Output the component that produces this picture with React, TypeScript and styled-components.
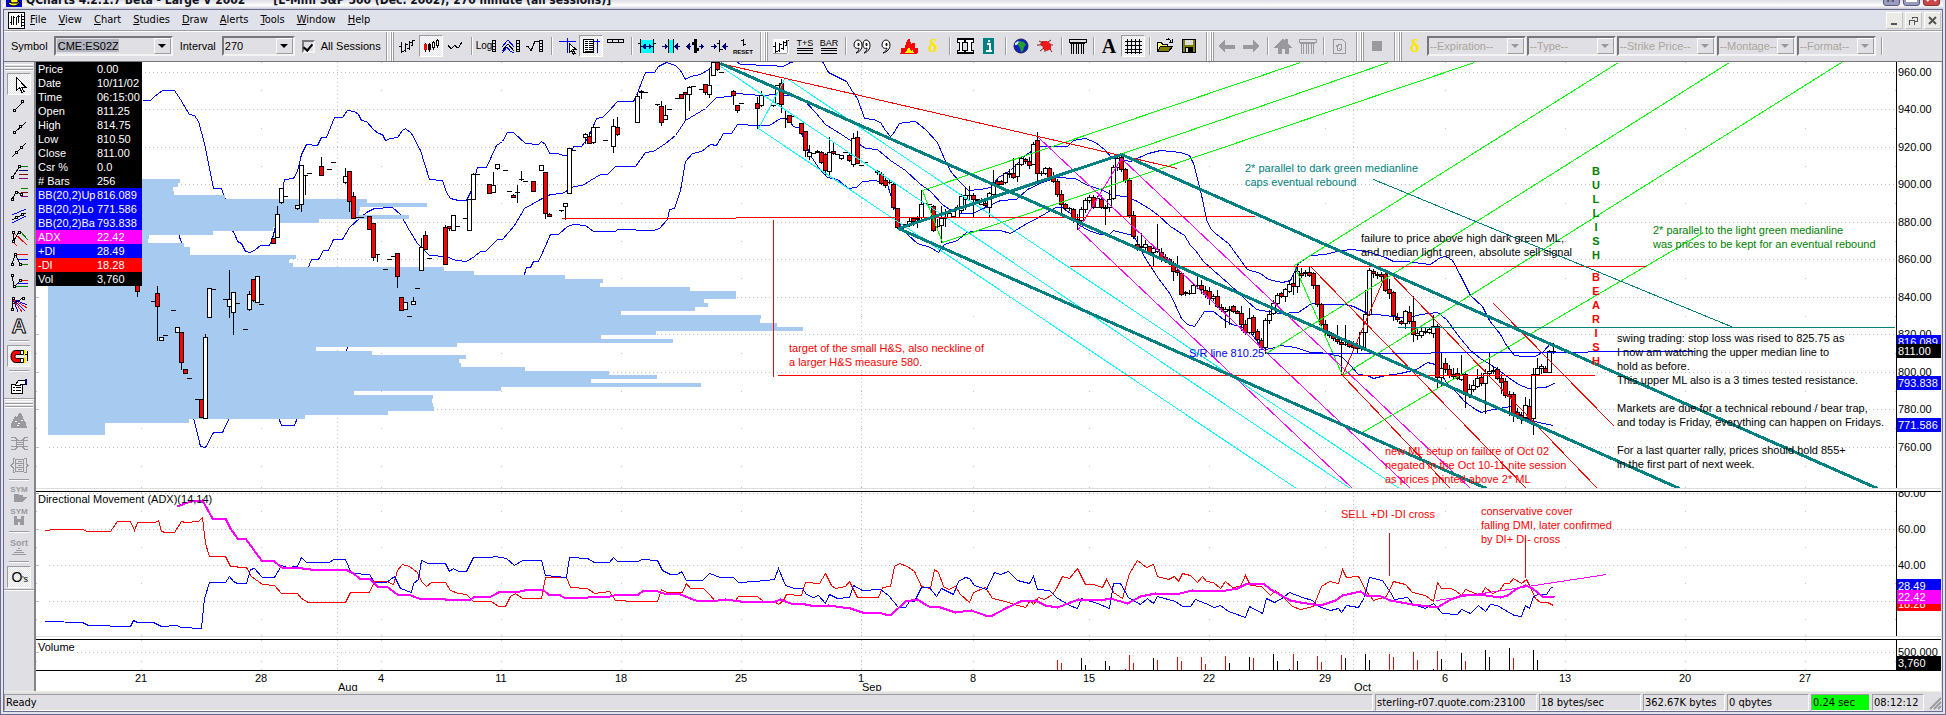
import React from "react";
import styled, { createGlobalStyle, css } from "styled-components";

const UI_FONT = '"DejaVu Sans Condensed", "DejaVu Sans", sans-serif';
const CHART_FONT = '"Liberation Sans", Arial, sans-serif';
const FACE = "#e0dfe3";
const SHADE = "#9d9da1";
const RED = "#ff0000";
const BLUE = "#0000ff";
const TEAL = "#008080";
const LIME = "#00ff00";
const CYAN = "#00ffff";
const MAGENTA = "#ff00ff";

const Global = createGlobalStyle`
  * { box-sizing: border-box; }
  body { margin: 0; background: #fff; font: 11px/14px ${CHART_FONT}; color: #000; }
  button, input, select { font: inherit; color: inherit; margin: 0; }
`;

/* ---------- window frame ---------- */

const Shell = styled.div`
  display: flex;
  flex-direction: column;
  height: 100vh;
  min-height: 600px;
  overflow: hidden;
  border: solid #6b6b90;
  border-width: 0 1px 1px;
  padding: 0 2px 2px;
  background: #e4e4ee;
`;

const TitleBar = styled.header`
  display: flex;
  align-items: flex-end;
  justify-content: space-between;
  flex: none;
  height: 9px;
  overflow: hidden;
  background: linear-gradient(#dcdde6, #ffffff 60%, #c9c9d6);
`;

const TitleText = styled.h1`
  display: flex;
  align-items: flex-end;
  gap: 28px;
  margin: 0;
  padding: 0 0 2px 3px;
  font: bold 12px/14px ${UI_FONT};
  color: #14141c;
  white-space: pre;
`;

const AppLogo = styled.svg`
  width: 16px;
  height: 16px;
  margin-right: -24px;
`;

const CaptionButtons = styled.div`
  display: flex;
  gap: 3px;
  padding: 0 3px 3px 0;
`;

const CaptionButton = styled.button<{ $close?: boolean }>`
  display: grid;
  place-items: end center;
  width: 17px;
  height: 17px;
  padding: 0 0 3px;
  border: 1px solid ${(p) => (p.$close ? "#8a3030" : "#5a5a80")};
  border-radius: 3px;
  background: ${(p) => (p.$close ? "#c8484c" : "#9b9bbd")};
`;

const Inner = styled.div`
  display: flex;
  flex-direction: column;
  flex: 1;
  min-height: 0;
  border: 1px solid #6b6b90;
  background: ${FACE};
`;

const MenuBar = styled.nav`
  display: flex;
  align-items: center;
  flex: none;
  height: 20px;
  padding: 0 1px 0 4px;
  background: #dfe1eb;
  font: 11px/14px ${UI_FONT};
`;

const MenuList = styled.div`
  display: flex;
  flex: 1;
  gap: 12px;
  padding-left: 5px;
`;

const MenuItem = styled.button`
  padding: 0;
  border: 0;
  background: none;
`;

const ChildButtons = styled.div`
  display: flex;
  gap: 2px;
`;

const ChildButton = styled.button`
  display: grid;
  place-items: center;
  width: 17px;
  height: 17px;
  padding: 0;
  border: 1px solid;
  border-color: #fff #c4c4c4 #c4c4c4 #fff;
  background: #eceae6;
`;

/* ---------- toolbar ---------- */

const Toolbar = styled.div`
  display: flex;
  align-items: center;
  flex: none;
  height: 32px;
  padding-left: 1px;
  overflow: hidden;
  border-top: 1px solid ${SHADE};
  border-bottom: 1px solid #77777b;
  box-shadow: inset 0 1px #fff;
  background: ${FACE};
`;

const Field = styled.label`
  display: flex;
  align-items: center;
  flex: none;
  gap: 6px;
  margin-left: 6px;
  white-space: nowrap;
`;

const Combo = styled.span<{ $w: number; $off?: boolean }>`
  display: flex;
  align-items: stretch;
  flex: none;
  width: ${(p) => p.$w}px;
  height: 20px;
  margin-right: 1px;
  border: 2px solid;
  border-color: #77777b #f4f4f4 #f4f4f4 #77777b;
  background: ${FACE};
  color: ${(p) => (p.$off ? "#a9a59c" : "#000")};
  select {
    flex: 1;
    min-width: 0;
    padding: 0 1px;
    border: 0;
    outline: 0;
    appearance: none;
    background: none;
    color: inherit;
    opacity: 1;
  }
`;

const SymbolInput = styled.input`
  width: 62px;
  height: 13px;
  padding: 0 1px;
  margin: 1px auto 0 1px;
  border: 0;
  background: #b2b4bf;
`;

const Arrow = styled.span<{ $off?: boolean }>`
  display: grid;
  place-items: center;
  width: 17px;
  border: 1px solid;
  border-color: #fff ${SHADE} ${SHADE} #fff;
  background: ${FACE};
  &::after {
    content: "";
    border: 4px solid transparent;
    border-top-color: ${(p) => (p.$off ? "#98989c" : "#000")};
    border-bottom: 0;
  }
`;

const Tick = styled.input`
  appearance: none;
  display: grid;
  place-items: center;
  width: 13px;
  height: 13px;
  border: 2px solid;
  border-color: #77777b #f4f4f4 #f4f4f4 #77777b;
  &:checked::after {
    content: "";
    width: 4px;
    height: 7px;
    border: solid #000;
    border-width: 0 2px 2px 0;
    transform: rotate(40deg);
  }
`;

const Grip = styled.i<{ $row?: boolean }>`
  flex: none;
  ${(p) =>
    p.$row
      ? css`
          height: 11px;
          margin: 0 1px;
          background: linear-gradient(transparent 2px, #fff 2px 3px, transparent 3px 4px, ${SHADE} 4px 5px, #fff 5px 6px, transparent 6px 7px, ${SHADE} 7px 8px, #fff 8px 9px, transparent 9px);
        `
      : css`
          width: 14px;
          height: 29px;
          background: linear-gradient(90deg, transparent 5px, ${SHADE} 5px 6px, #fff 6px 7px, transparent 7px 9px, #fff 9px 10px, ${SHADE} 10px 11px, #fff 11px 12px, ${SHADE} 12px 13px, transparent 13px);
        `}
`;

const Divider = styled.i<{ $row?: boolean }>`
  flex: none;
  ${(p) =>
    p.$row
      ? css`
          width: 20px;
          height: 8px;
          margin-left: 5px;
          background: linear-gradient(transparent 3px, ${SHADE} 3px 4px, #fff 4px 5px, transparent 5px);
        `
      : css`
          width: 8px;
          height: 18px;
          background: linear-gradient(90deg, transparent 4px, ${SHADE} 4px 5px, #fff 5px 6px, transparent 6px);
        `}
`;

const ToolButton = styled.button<{ $pressed?: boolean }>`
  display: grid;
  place-items: center;
  flex: none;
  width: 24px;
  height: 22px;
  padding: 0;
  border: 1px solid transparent;
  background: none;
  svg {
    width: 20px;
    height: 20px;
    overflow: visible;
  }
  ${(p) =>
    p.$pressed &&
    css`
      border-color: ${SHADE} #fff #fff ${SHADE};
      background: repeating-conic-gradient(#fff 0 25%, #e4e3e7 0 50%) 0 0 / 2px 2px;
    `}
`;

/* ---------- workspace ---------- */

const Workspace = styled.main`
  display: flex;
  flex: 1;
  min-height: 0;
  border-bottom: 1px solid #eeede4;
`;

const Palette = styled.aside`
  display: flex;
  flex-direction: column;
  flex: none;
  width: 32px;
  overflow: hidden;
  border-right: 2px solid #858589;
  background: ${FACE};
`;

const PaletteTools = styled.div`
  display: flex;
  flex-direction: column;
  flex: none;
  padding-bottom: 1px;
  border-bottom: 1px solid ${SHADE};
  box-shadow: 0 1px #fff;
  ${ToolButton} {
    margin-left: 3px;
  }
`;

const ChartArea = styled.section`
  display: flex;
  flex-direction: column;
  flex: 1;
  min-width: 0;
  margin-right: 1px;
  background: #fff;
`;

const Pane = styled.div<{ $h?: number }>`
  display: flex;
  flex: ${(p) => (p.$h ? "none" : "1")};
  height: ${(p) => (p.$h ? p.$h + "px" : "auto")};
  min-height: 0;
`;

const Plot = styled.div`
  position: relative;
  display: grid;
  grid-template-rows: minmax(0, 1fr);
  flex: 1;
  min-width: 0;
  overflow: hidden;
  > svg {
    display: block;
    width: 100%;
    height: 100%;
  }
`;

const Scale = styled.div`
  position: relative;
  flex: none;
  width: 45px;
  overflow: hidden;
  border-left: 1px solid #000;
`;

const ScaleLabel = styled.span<{ $bg?: string }>`
  position: absolute;
  left: 0;
  right: 0;
  padding-left: 1px;
  line-height: 14px;
  background: ${(p) => p.$bg || "none"};
  color: ${(p) => (p.$bg ? "#fff" : "#000")};
`;

const Splitter = styled.div`
  flex: none;
  height: 4px;
  border-top: 1px solid #dddddf;
  border-bottom: 1px solid #000;
`;

const TimeAxis = styled.div`
  position: relative;
  flex: none;
  height: 20px;
  margin-right: 45px;
  overflow: hidden;
`;

const AxisRule = styled.div`
  flex: none;
  height: 1px;
  background: #000;
`;

const Day = styled.span`
  position: absolute;
  top: 0;
  transform: translateX(-50%);
`;

const Month = styled.span`
  position: absolute;
  top: 9px;
`;

const Note = styled.p<{ $color?: string; $bold?: boolean }>`
  position: absolute;
  margin: 0;
  white-space: pre;
  text-align: ${(p) => (p.$bold ? "center" : "left")};
  font-weight: ${(p) => (p.$bold ? "bold" : "normal")};
  color: ${(p) => p.$color || "#000"};
`;

const DataWindow = styled.table`
  position: absolute;
  top: 0;
  left: 0;
  width: 106px;
  border-collapse: collapse;
  table-layout: fixed;
  background: #000;
  color: #fff;
  th,
  td {
    height: 14px;
    padding: 0 0 0 2px;
    font-weight: normal;
    text-align: left;
    white-space: nowrap;
  }
  th {
    width: 59px;
  }
`;

const DataRow = styled.tr<{ $bg: string }>`
  background: ${(p) => p.$bg};
`;

/* ---------- status bar ---------- */

const StatusBar = styled.footer`
  display: flex;
  align-items: center;
  flex: none;
  gap: 2px;
  height: 19px;
  padding-top: 1px;
  background: ${FACE};
  font: 11px/14px ${UI_FONT};
`;

const StatusCell = styled.span<{ $w?: number; $bg?: string }>`
  flex: ${(p) => (p.$w ? "none" : "1")};
  width: ${(p) => (p.$w ? p.$w + "px" : "auto")};
  height: 17px;
  padding: 1px 0 0 1px;
  border: 1px solid;
  border-color: ${SHADE} #fff #fff ${SHADE};
  background: ${(p) => p.$bg || "none"};
  white-space: nowrap;
  overflow: hidden;
`;

/* ---------- icons ---------- */

const K = "#000";
const G = "#9a9a9e";
const P = ({ d, c = K, w = 1, f = "none" }: { d: string; c?: string; w?: number; f?: string }) => (
  <path d={d} stroke={c} strokeWidth={w} fill={f} />
);
const T = ({ x = 10, y, s, c = K, b, children, serif, outline }: any) => (
  <text
    x={x}
    y={y}
    fontSize={s}
    fill={outline ? "#fff" : c}
    stroke={outline ? c : "none"}
    fontWeight={b ? "bold" : "normal"}
    textAnchor="middle"
    fontFamily={serif ? '"Liberation Serif", serif' : CHART_FONT}
  >
    {children}
  </text>
);
const ladder = (x: number) => <P d={`M${x}.5 4v12M${x + 3}.5 4v12M${x} 4.5h4M${x} 7.5h4M${x} 10.5h4M${x} 13.5h4M${x} 15.5h4`} />;
const ohlc = "M4.500 6v11M2 10.500h2M4.500 15.500h2M8.500 7v9M7 14.500h1M8.500 8.500h2M12.500 5v9M10 12.500h2M12.500 6.500h2M15.500 4v6M14 9.500h1M15.500 4.500h2";
const columns = (c: string) => <P c={c} d="M2 3.500h17v3h-17zM3 7.500h15M4.500 8v10M6.500 8v10M9.500 8v10M11.500 8v10M14.500 8v10M16.500 8v10" />;
const node = (x: number, y: number, c = K) => <rect x={x - 0.5} y={y - 0.5} width="2" height="2" fill="#fff" stroke={c} />;

const ICONS: Record<string, React.ReactNode> = {
  bars: <P d={ohlc} />,
  candles: (
    <>
      <P d="M4.500 7v9M8.500 7v9M12.500 5v9M16.500 3v9" />
      <rect x="3" y="8" width="3" height="6" fill={RED} />
      <rect x="7" y="8" width="3" height="6" fill={K} />
      <P f="#fff" d="M11.500 6.500h2v5h-2zM15.500 4.500h2v5h-2z" />
    </>
  ),
  line: <P d="M3 9l3 4 4-4 2 3 2-1 3-5" />,
  log: (
    <>
      <T x={7} y={13} s={10}>Log</T>
      {ladder(15)}
    </>
  ),
  bands: (
    <>
      <P c={BLUE} d="M1 11l6-7 6 7M1 17l5-6 3 4 4 2" />
      <P d="M1 15l6-7 6 7" />
      {ladder(15)}
    </>
  ),
  studyScale: (
    <>
      <P d="M1 11l2-1 3 5 4-10h4" />
      {ladder(14)}
    </>
  ),
  crosshair: (
    <>
      <P c={BLUE} d="M2 5.500h17M10.500 2v15" />
      <P f="#fff" d="M12.500 7.500v9l2-2 2 4 1.500-1-2-4h3z" />
    </>
  ),
  dataBox: (
    <>
      <rect x="2" y="3" width="11" height="14" fill="#fff" />
      <P c={BLUE} d="M13 5.500h6M16.500 3v14" />
      <P d="M2.500 3.500h10v13h-10zM4 5.500h3M8 5.500h4M4 7.500h3M8 7.500h4M4 9.500h3M8 9.500h4M4 11.500h3M8 11.500h4M4 13.500h3M8 13.500h4M4 15.500h8" />
    </>
  ),
  strip: <P d="M2.500 3.500h16v3h-16zM7.500 3v3M13.500 3v3" w={1} />,
  expand: (
    <>
      <rect x="4" y="4" width="12" height="13" fill={CYAN} />
      <P d="M3.500 3v14M16.500 3v14M1 7.500h2M17 7.500h2" />
      <P c="#00007f" f="#00007f" d="M5 10.500h10M5 10.500l3-2v4zM15 10.500l-3-2v4z" />
    </>
  ),
  narrow: (
    <>
      <rect x="8" y="4" width="4" height="13" fill={CYAN} />
      <P d="M7.500 3v14M12.500 3v14" />
      <P c="#00007f" f="#00007f" d="M1 10.500h5l-2-2v4l2-2M19 10.500h-5l2-2v4l-2-2" />
    </>
  ),
  thick: (
    <>
      <P w={3} d="M10.500 3v14M7 7.500h3M10 13.500h4" />
      <P c="#00007f" f="#00007f" d="M6 10.500h-4l2-2v4l-2-2M14 10.500h4l-2-2v4l2-2" />
    </>
  ),
  thin: (
    <>
      <P d="M10.500 4v12M8 7.500h2M11 13.500h3" />
      <P c="#00007f" f="#00007f" d="M2 10.500h5l-2-2v4l2-2M19 10.500h-5l2-2v4l-2-2" />
    </>
  ),
  reset: (
    <>
      <P d="M10.500 3v7M8 4.500h2M11 8.500h2" />
      <T y={18} s={6} b>RESET</T>
    </>
  ),
  chartWin: (
    <>
      <rect x="2" y="3" width="16" height="15" fill="#fff" />
      <P d={ohlc} />
      <P c={G} d="M16.500 4v13M2 17.500h14" />
    </>
  ),
  ts: (
    <>
      <T y={10} s={9}>T+S</T>
      <P d="M2 12.500h16M2 14.500h16M2 17.500h16" />
    </>
  ),
  bar: (
    <>
      <T y={10} s={9}>BAR</T>
      <P d="M2 12.500h16M2 14.500h16M2 17.500h16" />
    </>
  ),
  quotes: (
    <P
      f="#fff"
      d="M5 17c2-1 3-3 3-5-2 1-5 0-5-3s2-5 4-5 4 2 4 5c0 4-2 7-6 8zM13 17c2-1 3-3 3-5-2 1-4 0-4-3s1-5 3-5 4 2 4 5c0 4-2 7-6 8zM7 7.500h1v2H7zM15 7.500h1v2h-1z"
    />
  ),
  quote: <P f="#fff" d="M8 17c2-1 4-3 4-5-2 1-5 0-5-3s2-5 4-5 4 2 4 5c0 4-3 7-7 8zM11 7.500h1v2h-1z" />,
  fire: (
    <>
      <P c={RED} f={RED} d="M2 17l1-5 3 1 2-7 2-3 2 6 3-2 1 5 3 0-1 5z" />
      <path d="M6 17l2-3 2-3 2 4 2-1 1 3z" fill="#ffff00" />
    </>
  ),
  delta: <T y={16} s={19} c="#ffe800" b serif>δ</T>,
  pillars: (
    <>
      <P f="#fff" d="M2.500 3.500h7v3h-2v8h2v3h-7v-3h2v-8h-2z" w={1} />
      <P f="#fff" d="M10.500 3.500h8v3h-2v8h2v3h-8v-3h2v-8h-2z" w={1} />
      <P d="M2 3h17M2 17h17" w={2} />
    </>
  ),
  info: (
    <>
      <rect x="4" y="2" width="11" height="16" fill={TEAL} />
      <P c="#fff" w={2} d="M9 5h2M8 8h3v7M7 15h6" />
    </>
  ),
  globe: (
    <>
      <circle cx="10" cy="10" r="7" fill="#1020c0" stroke="#20205a" />
      <path d="M8 5l5 1 2 3-2 2-1 4-2 1-1-4-2-3z" fill="#20a030" />
      <path d="M4 7l3-2 1 1-2 3H4z" fill="#c8e8ff" />
    </>
  ),
  bug: (
    <>
      <path d="M7 5l5 0 4 3 0 5-4 2-3-1-2-4-2-2z" fill="#f01818" />
      <P c="#702020" d="M4 5l4 2M2 9l5 0M5 15l4-3M16 4l-3 2M18 9l-2 0M17 16l-2-3M10 16l0-2" />
    </>
  ),
  columns: columns(K),
  text: <T y={17} s={20} b serif>A</T>,
  grid: <P d="M4.500 3v15M8.500 3v15M12.500 3v15M16.500 3v15M2 5.500h17M2 9.500h17M2 13.500h17M2 16.500h17" />,
  open: (
    <>
      <P f="#ffff80" d="M2.500 15.500v-9h4l1 2h5v3" />
      <P f="#808000" d="M2.500 15.500l3-5h12l-4 5z" />
      <P d="M11 4c2-2 4-1 5 2M14 6h3v-3" />
    </>
  ),
  save: (
    <>
      <P f="#808000" d="M3.500 3.500h13v13h-13z" />
      <path d="M6 4h8v5H6z" fill="#dcdcdc" />
      <path d="M6 11h8v5H6z" fill="#000" />
      <path d="M7 12h2v4H7z" fill="#ddd" />
    </>
  ),
  back: <P c={G} f={G} d="M2.500 10l5-5v4h10v3h-10v3z" />,
  forward: <P c={G} f={G} d="M17.500 10l-5-5v4h-10v3h10v3z" />,
  home: <P c={G} f={G} d="M2 11l8-8 2 2v-2h2v4l4 4h-3v6h-3v-5H8v5H5v-6z" />,
  columnsOff: columns(G),
  refresh: <P c={G} d="M4.500 3.500h9l3 3v11h-12zM8 9v5h4M12 12V8H9M7 11l1-2 2 1M10 12l2 2 1-3" w={1} />,
  stop: <rect x="5" y="5" width="10" height="10" fill={G} />,
  pointer: <P f="#fff" d="M7.500 3.500v13l3-3 2.500 5 2-1-2.500-4.500h4z" />,
  segment: (
    <>
      <P d="M5 15l9-9" />
      {node(5, 14)}
      {node(13, 5)}
    </>
  ),
  ray: (
    <>
      <P d="M5 15l12-11" />
      {node(5, 14)}
      {node(11, 8)}
    </>
  ),
  extended: (
    <>
      <P d="M3 17l14-14" />
      {node(7, 12)}
      {node(12, 7)}
    </>
  ),
  retrace: (
    <>
      <P d="M3 16l8-12" />
      <P c="#008000" d="M10 4.500h9" />
      <P c="#000080" d="M10 8.500h9" />
      <P c="#800000" d="M10 12.500h9" />
      <P c="#800080" d="M10 16.500h9" />
      {node(3, 15)}
      {node(10, 4)}
    </>
  ),
  projection: (
    <>
      <P d="M3 15l5-8 4 4" />
      <P c="#008000" d="M12 4.500h7" />
      <P c="#800000" d="M12 8.500h7" />
      <P c="#800080" d="M12 12.500h7" />
      {node(3, 15)}
      {node(7, 8)}
      {node(12, 10)}
    </>
  ),
  channel: (
    <>
      <P c={BLUE} d="M3 9l14-6M3 17l14-7" />
      <P d="M3 14l14-7" />
      {node(7, 11)}
      {node(13, 8)}
    </>
  ),
  pitchfork: (
    <>
      <P c="#008000" d="M11 3l8 9" />
      <P c={RED} d="M4 4l14 13M3 13l5 5" />
      <P d="M4 4v10l6-10" />
      {node(4, 4)}
      {node(4, 13)}
      {node(10, 4)}
    </>
  ),
  levelsTop: (
    <>
      <P c={RED} d="M6 4.500h13" />
      <P c={BLUE} d="M8 9.500h11" />
      <P c="#008000" d="M12 14.500h7" />
      <P d="M3 15l3-11 5 10" />
      {node(3, 14)}
      {node(6, 4)}
      {node(11, 14)}
    </>
  ),
  levelsBottom: (
    <>
      <P c={RED} d="M12 8.500h7" />
      <P c={BLUE} d="M8 11.500h11" />
      <P c="#008000" d="M6 14.500h13" />
      <P d="M3 3l2 12 6-6" />
      {node(3, 3)}
      {node(5, 14)}
      {node(11, 8)}
    </>
  ),
  fan: (
    <>
      <P c={BLUE} d="M4 5l14 6M4 5l12 12M4 5l5 13" />
      <P c={RED} d="M4 5l14 9M4 5l9 13" />
      <P d="M3 15l1-11M4 10l10-6" />
      {node(4, 4)}
      {node(3, 15)}
      {node(14, 4)}
    </>
  ),
  label: <T y={17} s={20} b outline>A</T>,
  magnet: (
    <>
      <P c={K} f={RED} d="M12.500 4.500h-6c-6 0-6 12 0 12h6v-4h-5c-2 0-2-4 0-4h5z" />
      <P f="#fff" d="M11.500 4.500h3v4h-3zM11.500 12.500h3v4h-3z" />
      <P c="#ffe800" w={2} d="M16 4v6M16 11v6" />
      <P d="M18.500 5v10M16 8.500h3" />
    </>
  ),
  properties: (
    <>
      <P f="#fff" d="M2.500 8.500h11v9h-11z" />
      <P d="M4 11.500h2M7 11.500h5M4 14.500h2M7 14.500h5" />
      <P f="#fff" d="M6 9l4-5h6v4h-3l-3 2z" />
      <rect x="16" y="3" width="2" height="6" fill="#000080" />
    </>
  ),
  mountain: (
    <>
      <path d="M2 17V13l4-8 2 1 2-4 3 1 2 6 2 3 1 5z" fill={G} />
      <P c="#fff" d="M6 10h2M9 12h2M12 9h2M8 14h2" />
    </>
  ),
  link: <P c={G} d="M2 4.500h4l3 3h4l3-3h3M2 16.500h4l3-3h4l3 3h3M2 7.500h4l3 2h4l3-2h3M2 13.500h4l3-2h4l3 2h3M7.500 5v11M14.500 5v11" />,
  bracket: <P c={G} d="M6 3.500h-2v5l-2 2 2 2v5h2M15 3.500h2v5l2 2-2 2v5h-2M6.500 4.500h8v12h-8zM6.500 8.500h8M6.500 12.500h8M8.500 6.500h4M8.500 10.500h4M8.500 14.500h4" />,
  symOpen: (
    <>
      <T y={7} s={8} b c={G}>SYM</T>
      <path d="M5 17V9h4l1 1h4v2h4l-4 5z" fill={G} />
    </>
  ),
  symSave: (
    <>
      <T y={7} s={8} b c={G}>SYM</T>
      <path d="M5 9h10v9H5zM8 9v3h4V9M9 15v3h2v-3" fill={G} fillRule="evenodd" />
    </>
  ),
  sort: (
    <>
      <T y={9} s={9} b c={G}>Sort</T>
      <P c={G} d="M9 11.500h2M7 13.500h6M5 15.500h10M3 17.500h14" />
    </>
  ),
  zeros: (
    <>
      <T x={8} y={15} s={14}>O</T>
      <T x={16} y={15} s={9}>'s</T>
    </>
  ),
};

const SMOOTH = ["globe", "bug", "quotes", "quote", "magnet"];

const Tool = ({ id, on }: { id: string; on?: boolean }) => (
  <ToolButton type="button" $pressed={on} aria-pressed={on} aria-label={id}>
    <svg viewBox="0 0 20 20" shapeRendering={SMOOTH.includes(id) ? "auto" : "crispEdges"} aria-hidden="true">
      {ICONS[id]}
    </svg>
  </ToolButton>
);

const Tools = ({ ids, row }: { ids: string; row?: boolean }) => (
  <>
    {ids.split(" ").map((id, i) =>
      id === "|" ? <Divider key={i} $row={row} /> : <Tool key={i} id={id.replace("*", "")} on={id.endsWith("*")} />
    )}
  </>
);

/* ---------- chart data ---------- */

const X0 = 36;
const W = 1860;
const PRICE = { y: 62, h: 426 };
const ADX = { y: 492, h: 144 };
const VOL = { y: 640, h: 30 };
type Box = { y: number; h: number };

const px = (x: number) => `${((x - X0) / W) * 100}%`;
const py = (y: number, b: Box) => `${((y - b.y) / b.h) * 100}%`;

const DAYS: [number, string][] = [
  [141, "21"], [261, "28"], [381, "4"], [501, "11"], [621, "18"], [741, "25"], [861, "1"], [973, "8"],
  [1089, "15"], [1209, "22"], [1325, "29"], [1445, "6"], [1565, "13"], [1685, "20"], [1805, "27"],
];
const MONTHS: [number, string][] = [[337, "Aug"], [861, "Sep"], [1353, "Oct"]];

const PRICES: [number, string][] = [
  [72, "960.00"], [109, "940.00"], [147, "920.00"], [184, "900.00"], [222, "880.00"], [259, "860.00"],
  [297, "840.00"], [334, "820.00"], [372, "800.00"], [409, "780.00"], [447, "760.00"],
];

const UPPER = "142,100 150,100 154,96 162,90 174,90 180,99 189,114 194,115 198,121 204,143 213,188 221,188 225,199 228,225 234,233 237,241 241,243 245,251 250,252 255,249 260,245 269,245 272,238 278,214 284,179 293,178 297,171 301,154 306,144 317,145 321,137 326,137 334,117 342,117 347,110 354,111 358,114 361,120 366,121 373,129 378,133 382,134 385,140 390,138 397,137 402,130 405,128 411,133 420,150 429,179 442,180 446,192 450,198 458,200 466,200 471,190 477,167 486,167 496,145 502,141 507,132 513,132 525,143 538,144 541,141 545,144 549,153 557,153 563,155 570,154 573,146 581,146 588,137 596,118 602,117 609,110 617,101 633,101 636,95 645,72 654,72 658,66 666,62 675,65 680,70 685,79 690,76 700,74 708,69 717,61 736,61 740,64 770,65 783,66 790,62 800,60 822,61 828,72 838,77 846,81 852,91 857,98 864,118 873,119 880,122 885,130 890,136 893,133 899,123 905,122 915,121 925,129 937,142 945,161 951,172 958,180 968,190 980,189 990,187 998,177 1010,170 1025,155 1032,150 1040,146 1067,146 1073,140 1085,138 1095,142 1104,149 1111,157 1130,161 1139,157 1148,153 1160,150 1171,151 1180,152 1189,155 1193,163 1197,178 1202,199 1206,219 1210,228 1215,233 1228,243 1236,254 1247,269 1260,273 1268,279 1277,281 1282,282 1290,280 1298,263 1310,255 1325,254 1340,250 1353,249 1370,252 1385,257 1393,261 1405,261 1430,264 1440,257 1446,256 1452,260 1460,275 1470,295 1482,306 1489,320 1500,334 1506,345 1514,355 1523,356 1535,356 1543,351 1550,343 1554,344";
const MIDDLE = "333,239 342,239 349,227 359,218 366,212 374,208 392,207 400,214 409,230 417,243 423,249 429,255 445,256 456,260 466,261 474,256 480,251 485,251 497,239 502,239 514,225 524,208 533,203 540,199 550,194 562,193 573,186 582,185 590,180 600,174 607,174 615,166 635,166 645,152 653,151 665,143 675,135 685,120 695,114 705,108 716,97 731,96 736,93 760,95 778,94 795,96 803,99 815,112 825,124 841,134 850,140 858,143 865,148 877,149 890,160 905,170 919,183 930,191 942,204 952,211 962,213 972,213 985,207 1000,200 1016,199 1027,189 1042,182 1056,177 1075,178 1085,184 1100,189 1113,195 1126,196 1137,201 1150,209 1158,215 1170,226 1184,235 1190,245 1195,250 1203,261 1213,270 1228,283 1246,300 1256,309 1267,311 1280,313 1298,312 1311,303 1320,304 1345,304 1353,306 1367,313 1385,315 1400,317 1413,316 1420,314 1437,312 1446,319 1460,338 1470,350 1480,358 1496,368 1508,377 1518,384 1528,388 1545,387 1554,383";
const LOWER = ["178,232 180,240 184,246", "193,417 200,446 205,447 213,432 222,432 229,417", "278,417 281,425 294,425 297,417", "344,355 348,345", "307,269 311,259 318,259 323,250 328,250 333,239", "523,277 526,267 530,267 533,261 538,261 543,250 550,234 558,234 567,226 573,224 585,225 593,231 615,231 617,229 653,230 659,228 667,219 669,209 674,208 680,190 685,161 692,153 701,151 710,144 716,145 723,133 731,133 737,124 757,125 769,125 780,118 788,119 793,126 800,128 803,138 810,155 820,170 827,177 837,179 848,188 856,187 862,181 875,180 887,184 893,204 900,225 908,235 917,243 930,247 938,252 944,244 957,240 966,232 980,230 1000,230 1010,233 1023,225 1040,216 1055,207 1062,207 1070,213 1078,224 1088,230 1100,234 1109,234 1113,230 1120,232 1133,235 1145,258 1158,278 1170,294 1181,318 1187,324 1194,326 1204,311 1213,311 1223,319 1232,324 1247,328 1259,344 1265,349 1275,347 1280,345 1295,347 1310,352 1320,352 1341,356 1350,365 1358,374 1367,375 1373,378 1385,375 1400,373 1416,369 1427,362 1435,364 1446,382 1457,393 1464,401 1475,409 1481,412 1488,410 1510,406 1520,414 1530,420 1543,423 1553,425"];

/* volume-at-price rows, four units tall, first row at 179 */
const PROFILE = [
  180, 178, 173, 174, 225, 367, 427, 360, 359, 409, 319, 280, 273, 213, 149, 148, 184, 190, 190, 296, 289, 293, 444, 474,
  565, 603, 600, 690, 736, 736, 704, 708, 695, 621, 761, 760, 777, 803, 656, 601, 673, 457, 316, 372, 466, 459, 461, 525,
  609, 657, 591, 701, 501, 354, 433, 432, 433, 434, 388, 305, 189, 105, 105, 105,
];

/* x, high, top, bottom, low, colour (r = down, w = up, d = unchanged) */
const CANDLES = `137 270 270 291 296 r;153 301 301 301 301 d;157 286 293 306 340 r;161 337 337 340 340 w;165 335 335 335 335 d;173 310 310 310 310 d;177 327 327 332 332 w;181 332 332 362 369 r;185 369 369 373 373 r;189 378 378 378 378 d;197 399 399 399 399 d;201 399 399 417 417 r;205 334 337 418 418 w;209 288 288 317 317 w;213 289 289 289 289 d;225 299 299 299 299 d;229 270 299 306 317 w;233 292 292 312 334 w;237 303 303 303 303 d;245 329 329 329 329 d;249 291 294 309 310 w;253 279 279 300 301 r;257 276 276 302 302 w;261 304 304 304 304 d;273 238 238 243 243 r;277 206 214 237 237 w;281 188 188 202 203 w;285 196 196 196 196 d;297 205 205 208 209 w;301 165 165 204 211 w;305 175 175 175 194 d;309 173 173 173 173 d;321 157 166 175 175 r;329 169 169 169 169 d;333 162 162 162 162 d;345 168 176 182 183 w;349 171 171 201 211 r;353 192 196 218 218 r;357 217 217 217 217 d;361 217 217 217 217 d;369 216 216 229 229 r;373 223 223 257 260 r;377 254 254 254 261 d;385 269 269 269 269 d;389 259 259 259 259 d;393 256 256 256 256 d;397 253 253 276 287 r;401 297 297 310 310 r;405 302 302 309 309 w;409 316 316 316 316 d;413 297 301 304 304 w;417 288 288 288 288 d;421 238 247 270 270 w;425 231 235 249 249 r;429 258 258 258 258 d;445 225 227 264 264 r;449 226 226 228 230 r;453 215 215 230 230 w;457 226 226 226 226 d;465 218 218 218 218 d;469 199 199 230 230 w;473 173 174 199 199 w;477 174 174 174 174 d;489 184 184 193 193 r;493 172 185 192 192 w;497 164 164 168 169 w;505 170 170 170 170 d;509 191 191 191 191 d;513 194 195 197 197 r;517 185 192 192 202 d;521 171 179 179 180 d;525 181 181 181 181 d;533 181 181 191 191 r;541 165 165 170 170 w;545 172 172 213 218 r;549 213 214 216 216 r;561 210 210 210 211 d;565 203 203 206 219 w;569 148 148 193 193 w;573 150 150 150 150 d;585 133 134 137 143 w;589 132 136 143 143 r;593 126 127 142 143 w;597 127 127 127 127 d;605 140 140 140 140 d;613 119 126 146 152 w;617 117 127 134 135 r;637 94 96 122 122 w;641 90 91 92 98 w;645 92 92 92 92 d;657 104 104 104 105 d;661 101 106 122 125 r;665 105 115 119 119 w;669 109 109 109 109 d;677 98 98 98 98 d;681 94 94 98 98 r;685 92 92 94 120 r;689 86 87 94 110 w;693 86 86 86 86 d;701 89 89 89 89 d;705 84 84 92 94 r;709 68 85 94 97 w;713 62 62 75 75 w;717 62 62 69 70 r;721 72 72 72 72 d;733 90 91 95 104 r;737 105 105 110 112 r;741 103 103 103 103 d;757 97 103 108 128 r;761 91 95 105 106 w;773 105 105 105 106 d;777 85 85 103 103 w;781 79 83 104 112 r;785 109 118 118 127 d;789 115 115 122 122 r;793 116 116 116 116 d;801 123 123 133 134 r;805 131 131 150 156 r;809 145 152 156 159 w;813 153 153 153 153 d;817 150 151 152 152 r;821 151 152 162 163 r;825 153 154 170 174 r;829 137 152 171 177 w;833 142 151 153 154 r;837 154 154 154 154 d;841 155 155 158 159 w;845 152 152 152 152 d;849 154 155 160 161 r;853 133 138 164 166 w;857 131 137 163 163 r;861 165 165 165 165 d;865 162 162 162 162 d;877 170 171 172 174 r;881 172 174 183 184 r;885 178 180 185 187 r;889 180 182 182 183 d;893 182 184 207 209 r;897 208 208 227 228 r;901 226 226 226 227 d;905 224 224 226 227 d;909 217 221 224 226 w;913 218 218 221 225 r;917 216 218 219 227 r;921 190 204 217 218 w;925 203 203 203 203 d;929 204 204 204 204 d;933 205 206 230 231 r;937 219 226 226 230 d;941 206 218 225 242 w;945 209 218 218 226 d;949 211 213 217 217 w;953 216 216 216 217 d;957 205 207 217 217 w;961 194 196 210 212 w;965 187 195 199 209 w;969 186 195 195 200 d;973 193 195 199 217 r;977 199 199 200 202 r;981 198 200 204 204 w;985 201 203 205 206 r;989 192 193 207 217 w;993 170 184 194 196 w;997 178 181 184 186 r;1001 180 181 184 184 r;1005 172 173 182 183 w;1009 169 173 174 177 d;1013 158 173 177 178 r;1017 164 164 176 181 w;1021 157 158 164 165 w;1025 158 159 161 163 r;1029 157 161 165 168 r;1033 142 144 164 164 w;1037 132 140 173 182 r;1041 171 173 173 175 d;1045 167 168 173 174 w;1049 167 168 177 178 r;1053 172 177 181 182 r;1057 179 181 194 196 r;1061 190 194 204 214 r;1065 203 204 208 210 r;1069 207 208 208 210 d;1073 208 209 219 222 r;1077 214 219 221 229 r;1081 207 209 220 221 w;1085 198 200 209 212 w;1089 195 197 200 202 w;1093 195 197 207 208 r;1097 196 198 207 207 w;1101 195 199 207 208 r;1105 205 207 208 224 w;1109 190 199 207 211 w;1113 165 167 198 199 w;1117 155 158 167 170 w;1121 154 157 169 171 r;1125 168 169 180 182 r;1129 178 180 215 217 r;1133 211 215 236 238 r;1137 236 244 247 250 r;1141 233 246 247 248 w;1145 240 244 247 250 w;1149 246 246 252 253 r;1153 247 248 252 265 w;1157 224 249 251 252 w;1161 248 252 259 261 r;1165 254 257 259 262 r;1169 258 259 262 264 r;1173 261 263 271 280 r;1177 256 270 272 275 r;1181 272 273 294 295 r;1185 291 292 293 295 r;1189 290 293 293 294 d;1193 284 285 293 293 w;1197 277 285 285 288 d;1201 280 285 289 293 r;1205 286 290 294 297 r;1209 287 291 298 304 r;1213 294 296 298 300 w;1217 290 296 306 307 r;1221 304 307 309 311 r;1225 307 309 311 327 w;1229 306 309 310 324 w;1233 305 306 311 312 r;1237 310 311 313 313 r;1241 306 313 324 330 r;1245 320 324 332 334 r;1249 308 318 332 333 w;1253 315 317 332 334 r;1257 329 331 339 340 r;1261 338 340 347 349 r;1265 318 320 347 353 w;1269 310 314 320 323 w;1273 300 303 313 314 w;1277 293 295 303 305 w;1281 292 293 296 297 r;1285 288 289 296 301 w;1289 280 284 291 292 w;1293 275 283 286 294 r;1297 265 271 286 292 w;1301 268 273 275 277 r;1305 270 272 273 276 w;1309 266 272 275 276 r;1313 272 273 285 288 r;1317 285 285 304 306 r;1321 303 304 324 327 r;1325 320 324 332 334 r;1329 331 332 335 337 r;1333 333 335 338 340 r;1337 325 339 341 343 r;1341 338 342 344 375 r;1345 325 344 344 345 d;1349 340 342 346 347 r;1353 341 345 347 348 r;1357 343 346 348 353 r;1361 330 332 348 350 w;1365 290 314 332 350 w;1369 268 270 314 315 w;1373 269 271 273 277 r;1377 272 274 275 278 w;1381 272 274 276 280 r;1385 270 274 290 291 r;1389 279 289 293 298 r;1393 291 292 315 320 r;1397 313 317 319 321 r;1401 320 321 323 324 r;1405 310 311 323 328 w;1409 306 312 321 323 r;1413 296 321 334 341 r;1417 329 333 335 339 w;1421 328 331 335 337 w;1425 328 331 332 333 d;1429 328 329 332 333 w;1433 315 326 333 337 w;1437 324 326 377 387 r;1441 352 368 377 385 w;1445 358 363 369 372 r;1449 365 369 375 377 r;1453 368 374 376 379 r;1457 368 373 378 379 r;1461 355 374 379 380 w;1465 373 374 394 407 r;1469 384 389 394 397 w;1473 380 385 389 391 w;1477 369 378 386 387 w;1481 373 377 383 385 r;1485 369 373 383 413 w;1489 353 371 373 375 w;1493 366 370 371 373 w;1497 367 369 378 379 r;1501 374 378 382 393 r;1505 378 381 395 397 r;1509 391 394 396 415 r;1513 392 394 414 421 r;1517 408 412 416 418 r;1521 412 415 417 423 r;1525 397 405 417 420 w;1529 399 406 418 420 r;1533 368 374 418 434 w;1537 358 368 374 375 w;1541 364 366 368 373 w;1545 366 368 372 372 r;1549 350 351 372 372 w;1553 343 351 351 353 d`
  .split(";")
  .map((s) => s.split(" "));

/* colour, width, x1, y1, x2, y2 */
const STUDIES: [string, number, number, number, number, number][] = [
  [CYAN, 1, 720, 66, 1350, 488], [CYAN, 1, 785, 77, 1399, 488], [CYAN, 1, 758, 128, 1296, 488], [CYAN, 1, 758, 128, 785, 77],
  [LIME, 1, 922, 190, 1300, 62], [LIME, 1, 1000, 195, 1388, 62], [LIME, 1, 942, 242, 1474, 62], [LIME, 1, 922, 190, 942, 242],
  [LIME, 1, 1294, 265, 1618, 62], [LIME, 1, 1266, 353, 1729, 62], [LIME, 1, 1342, 375, 1841, 62], [LIME, 1, 1362, 432, 1703, 232],
  [LIME, 1, 1294, 265, 1342, 375],
  [MAGENTA, 1, 1078, 229, 1352, 488], [MAGENTA, 1, 1038, 137, 1410, 488], [MAGENTA, 1, 1121, 158, 1470, 488], [MAGENTA, 1, 1078, 229, 1121, 158],
  [RED, 1, 1310, 266, 1526, 488], [RED, 1, 1387, 270, 1597, 488], [RED, 1, 1342, 375, 1450, 488], [RED, 1, 1493, 303, 1614, 426], [RED, 1, 1342, 375, 1387, 270],
  [RED, 1, 720, 63, 1177, 168], [RED, 1, 561, 218, 735, 218], [RED, 1, 735, 217, 1085, 217], [RED, 1, 1085, 216, 1254, 216],
  [RED, 1, 773, 219, 773, 376], [RED, 1, 777, 375, 1594, 375], [RED, 1, 1069, 266, 1645, 266],
  [BLUE, 1, 1266, 353, 1430, 353], [BLUE, 1, 1430, 352, 1587, 352], [BLUE, 1, 1587, 351, 1693, 351],
  [TEAL, 1, 1397, 327, 1894, 327], [TEAL, 1, 1373, 179, 1733, 327],
  [TEAL, 2, 720, 63, 1679, 488], [TEAL, 2, 1121, 154, 1877, 488], [TEAL, 2, 898, 228, 1486, 488], [TEAL, 2, 898, 228, 1121, 154],
];

const MINUS_DI = "45,530 55,529 83,529 86,531 92,531 110,531 117,521 130,521 134,530 137,522 155,522 158,520 161,531 165,532 174,532 181,521 185,522 198,521 202,517 205,543 209,556 225,556 230,566 235,566 239,567 246,567 251,576 262,584 274,585 281,593 297,593 301,598 308,602 345,602 350,592 369,592 374,581 386,581 393,584 397,570 402,564 409,566 417,572 421,581 426,586 431,582 445,582 450,590 458,593 466,594 473,601 491,601 498,606 505,606 510,596 515,593 522,598 541,598 545,577 566,577 570,587 587,588 594,593 609,591 615,600 636,601 657,601 661,589 666,592 682,592 686,583 690,588 703,588 709,594 715,601 725,599 735,600 738,596 757,596 763,601 774,601 778,604 783,600 786,594 801,595 805,582 819,583 825,573 831,585 835,588 845,586 849,581 857,597 878,597 882,587 890,586 894,566 899,563 907,566 914,571 921,586 930,588 934,569 938,572 943,586 948,589 955,586 960,594 969,602 973,592 985,587 992,598 1005,601 1014,604 1025,607 1030,600 1033,604 1038,597 1044,599 1052,594 1056,588 1062,576 1069,578 1077,568 1085,584 1093,584 1102,587 1106,579 1113,592 1122,598 1129,573 1137,560 1146,567 1153,564 1157,576 1168,579 1174,576 1178,581 1182,573 1190,575 1197,582 1202,576 1206,581 1213,582 1220,588 1225,581 1232,587 1240,586 1245,575 1250,585 1261,586 1270,595 1275,590 1282,596 1292,606 1300,609 1313,606 1321,586 1329,581 1338,583 1342,569 1346,577 1358,576 1366,591 1373,600 1386,596 1393,581 1405,584 1412,592 1425,595 1433,601 1437,582 1441,588 1450,588 1455,590 1461,595 1465,589 1475,593 1480,595 1485,587 1492,593 1499,590 1504,583 1509,583 1513,578 1521,583 1526,579 1531,589 1535,598 1540,602 1547,602 1553,605";
const PLUS_DI = "45,621 82,622 88,625 130,626 133,620 137,622 153,622 161,626 176,625 181,627 201,628 204,598 209,582 225,582 229,576 233,581 237,583 246,583 250,569 254,568 262,577 274,577 281,565 287,567 297,566 301,557 306,562 329,562 333,559 345,559 351,573 369,574 374,582 386,582 394,576 400,588 411,592 413,583 418,579 421,560 428,563 445,563 449,571 453,568 458,571 466,571 473,557 491,557 494,556 506,558 514,565 522,560 541,560 545,575 566,577 569,557 587,558 594,562 609,562 613,557 617,561 637,561 642,559 657,560 662,570 670,574 677,574 681,571 686,580 702,580 709,573 720,577 733,577 738,582 755,581 774,579 778,568 785,585 794,588 802,588 806,594 813,597 818,595 825,603 829,594 837,598 849,597 853,585 862,590 880,589 888,595 898,607 905,607 909,601 914,601 921,587 929,587 936,596 941,588 953,594 958,581 965,577 969,578 974,585 986,589 994,572 1000,574 1008,571 1017,580 1029,583 1033,576 1037,589 1049,590 1056,597 1069,605 1077,608 1081,598 1097,603 1109,608 1113,583 1120,583 1128,597 1140,604 1147,598 1153,603 1157,596 1175,601 1182,606 1190,606 1195,599 1205,603 1214,607 1220,605 1228,611 1245,617 1249,606 1262,613 1266,598 1274,602 1283,597 1289,592 1302,597 1312,600 1318,606 1330,610 1338,608 1341,612 1346,605 1358,607 1364,597 1369,577 1382,580 1390,592 1394,599 1407,597 1413,604 1425,608 1433,603 1442,613 1457,614 1461,609 1470,613 1478,605 1485,611 1490,604 1497,605 1505,610 1514,615 1521,616 1525,605 1529,608 1533,596 1538,594 1546,594 1550,588 1553,586";
const ADX_LINE = "177,506 190,501 202,500 212,518 225,518 230,528 237,538 245,538 253,549 261,560 273,560 281,567 302,568 310,569 345,569 353,573 359,578 369,578 377,586 386,586 397,594 408,594 418,598 445,599 470,599 473,597 491,596 498,592 520,591 528,589 542,589 548,594 560,595 565,598 610,596 617,594 638,594 643,590 655,590 663,593 680,594 695,600 710,601 725,599 740,601 775,601 780,599 790,603 805,604 815,606 828,605 850,608 862,612 878,612 885,614 891,614 905,601 917,599 928,606 940,607 955,612 971,610 985,615 992,615 1005,608 1020,601 1035,600 1045,605 1057,607 1070,602 1078,599 1100,600 1110,598 1127,603 1140,596 1155,593 1175,594 1192,590 1220,591 1237,588 1247,583 1263,583 1270,589 1290,600 1300,602 1320,605 1335,600 1342,595 1360,591 1366,595 1378,595 1390,600 1412,604 1437,607 1450,599 1462,595 1478,594 1500,597 1507,595 1517,588 1525,585 1532,588 1542,596 1554,597";

const VOLUMES = "1057 660 r;1061 663 r;1081 658 k;1085 665 k;1105 661 k;1109 666 k;1125 669 r;1129 655 r;1133 663 r;1153 658 k;1157 660 r;1177 657 r;1181 661 r;1201 657 r;1205 664 r;1225 656 r;1229 663 k;1249 657 k;1253 658 r;1273 654 k;1277 661 k;1289 669 k;1293 654 r;1297 661 k;1317 656 r;1321 662 r;1341 655 r;1345 658 k;1365 654 k;1369 660 k;1389 654 r;1393 657 r;1413 652 r;1417 660 r;1433 669 k;1437 651 r;1441 659 k;1461 653 k;1465 661 r;1485 650 k;1489 657 k;1509 648 k;1513 658 r;1533 650 k;1537 660 k"
  .split(";")
  .map((s) => s.split(" "));

const PRICE_NOTES: [number, number, string, string, boolean?][] = [
  [1245, 161, TEAL, "2* parallel to dark green medianline\ncaps eventual rebound"],
  [1361, 231, "#000", "failure to price above high dark green ML,\nand median light green, absolute sell signal"],
  [1653, 223, "#008000", "2* parallel to the light green medianline\nwas prices to be kept for an eventual rebound"],
  [789, 341, RED, "target of the small H&S, also neckline of\na larger H&S measure 580."],
  [1189, 346, BLUE, "S/R line 810.25"],
  [1385, 444, RED, "new ML setup on failure of Oct 02\nnegated in the Oct 10-11 nite session\nas prices printed above 2* ML"],
  [1617, 331, "#000", "swing trading: stop loss was rised to 825.75 as\nI now am watching the upper median line to\nhold as before.\nThis upper ML also is a 3 times tested resistance.\n\nMarkets are due for a technical rebound / bear trap,\nand today is Friday, everything can happen on Fridays.\n\nFor a last quarter rally, prices should hold 855+\nin the first part of next week."],
  [1592, 164, "#008000", "B\nU\nL\nL\nI\nS\nH", true],
  [1592, 270, RED, "B\nE\nA\nR\nI\nS\nH", true],
];

const DATA: [string, string, string][] = [
  ["Price", "0.00", "#000"], ["Date", "10/11/02", "#000"], ["Time", "06:15:00", "#000"], ["Open", "811.25", "#000"],
  ["High", "814.75", "#000"], ["Low", "810.50", "#000"], ["Close", "811.00", "#000"], ["Csr %", "0.0", "#000"],
  ["# Bars", "256", "#000"], ["BB(20,2)Up", "816.089", BLUE], ["BB(20,2)Lo", "771.586", BLUE], ["BB(20,2)Ba", "793.838", BLUE],
  ["ADX", "22.42", MAGENTA], ["+DI", "28.49", BLUE], ["-DI", "18.28", RED], ["Vol", "3,760", "#000"],
];

/* ---------- chart parts ---------- */

const Canvas = ({ box, title, children }: { box: Box; title: string; children: React.ReactNode }) => (
  <svg viewBox={`${X0} ${box.y} ${W} ${box.h}`} preserveAspectRatio="none" shapeRendering="crispEdges" role="img" aria-label={title}>
    {children}
  </svg>
);

const GridLines = ({ box, rows, halves, from = 49 }: { box: Box; rows: number[]; halves: number[]; from?: number }) => (
  <g stroke="#c0c0c0" fill="none">
    {rows.map((y) => (
      <React.Fragment key={y}>
        <path d={`M${from} ${y + 0.5}H1896`} strokeDasharray="1 3" />
        <path d={`M36 ${y + 0.5}h3`} />
      </React.Fragment>
    ))}
    {MONTHS.map(([x]) => (
      <path key={x} d={`M${x + 0.5} ${box.y}V${box.y + box.h}`} strokeDasharray="1 3" />
    ))}
    {halves.map((y) => (
      <path key={y} d={[36, ...DAYS.map((d) => d[0]), 1895].map((x) => `M${x} ${y + 0.5}h1`).join("")} />
    ))}
    {DAYS.map(([x]) => (
      <path key={x} d={`M${x + 0.5} ${box.y}v1M${x + 0.5} ${box.y + box.h - 1}v1`} />
    ))}
  </g>
);

const Line = ({ pts, c, w = 1 }: { pts: string; c: string; w?: number }) => (
  <polyline points={pts} stroke={c} strokeWidth={w} fill="none" transform="translate(0.5 0.5)" />
);

const HeavyLine = ({ x1, y1, x2, y2, c }: { x1: number; y1: number; x2: number; y2: number; c: string }) => (
  <line x1={x1} y1={y1} x2={x2} y2={y2} stroke={c} strokeWidth="3" transform="translate(0.5 0.5)" />
);

const Candle = ({ c }: { c: string[] }) => {
  const [x, hi, top, bot, lo] = c.slice(0, 5).map(Number);
  const flat = c[5] === "d";
  return (
    <g>
      <rect x={x} y={hi} width="1" height={lo - hi + 1} fill="#000" />
      <rect x={x - 2} y={top} width="5" height={bot - top + 1} fill="#000" />
      {!flat && <rect x={x - 1} y={top + 1} width="3" height={Math.max(bot - top - 1, 0)} fill={c[5] === "r" ? RED : "#fff"} />}
    </g>
  );
};

const ComboBox = ({ w, off, text, label }: { w: number; off?: boolean; text: string; label?: string }) => (
  <Combo $w={w} $off={off}>
    <select disabled={off} aria-label={label || text} defaultValue={text}>
      <option>{text}</option>
    </select>
    <Arrow $off={off} aria-hidden="true" />
  </Combo>
);

export default function App() {
  return (
    <>
      <Global />
      <Shell>
        <TitleBar>
          <TitleText>
            <AppLogo viewBox="0 0 16 16" aria-hidden="true">
              <rect width="16" height="16" fill="#0000d0" />
              <path d="M2 12c3 4 9 4 12-1M4 5h8v7H5z" fill="#ffff00" stroke="#000" />
            </AppLogo>
            <span>QCharts 4.2.1.7 Beta - Large V 2002</span>
            <span>[E-Mini S&amp;P 500 (Dec. 2002), 270 minute (all sessions)]</span>
          </TitleText>
          <CaptionButtons>
            <CaptionButton type="button" aria-label="Minimize">
              <svg width="9" height="7"><path d="M1 5h5v2H1z" fill="#fff" stroke="#224" /></svg>
            </CaptionButton>
            <CaptionButton type="button" aria-label="Restore">
              <svg width="11" height="9"><path d="M1 0v8h9V0" fill="none" stroke="#fff" strokeWidth="2" /></svg>
            </CaptionButton>
            <CaptionButton type="button" $close aria-label="Close">
              <svg width="11" height="10"><path d="M1 0l9 9M10 0L1 9" stroke="#fff" strokeWidth="2" /></svg>
            </CaptionButton>
          </CaptionButtons>
        </TitleBar>
        <Inner>
          <MenuBar>
            <svg width="17" height="17" viewBox="0 0 17 17" shapeRendering="crispEdges" aria-hidden="true">
              <rect x="0.5" y="0.5" width="16" height="16" fill="#fff" stroke="#000" />
              <path d="M3.500 4v9M5.500 4v9M2 10.500h2M5 5.500h2M8.500 5v8M10.500 3v8M9 4.500h3M13.500 2v13M13 4.500h3M13 7.500h3M13 10.500h3M13 13.500h3" stroke="#000" fill="none" />
            </svg>
            <MenuList>
              {["File", "View", "Chart", "Studies", "Draw", "Alerts", "Tools", "Window", "Help"].map((m) => (
                <MenuItem key={m} type="button">
                  <u>{m[0]}</u>
                  {m.slice(1)}
                </MenuItem>
              ))}
            </MenuList>
            <ChildButtons>
              <ChildButton type="button" aria-label="Minimize chart">
                <svg width="9" height="9"><path d="M1 7h6v2H1z" fill="#555" /></svg>
              </ChildButton>
              <ChildButton type="button" aria-label="Restore chart">
                <svg width="9" height="9" shapeRendering="crispEdges"><path d="M0 4.500h6M.5 4v5h5V4M3 1h6M3.500 1v2M8.500 1v5M6 5.500h3" stroke="#555" fill="none" /></svg>
              </ChildButton>
              <ChildButton type="button" aria-label="Close chart">
                <svg width="9" height="9"><path d="M1 1l7 7M8 1L1 8" stroke="#555" strokeWidth="2" /></svg>
              </ChildButton>
            </ChildButtons>
          </MenuBar>

          <Toolbar role="toolbar" aria-label="Chart toolbar">
            <Field>
              Symbol
              <Combo $w={119}>
                <SymbolInput defaultValue="CME:ES02Z" />
                <Arrow aria-hidden="true" />
              </Combo>
            </Field>
            <Field>
              Interval
              <ComboBox w={73} text="270" label="Interval" />
            </Field>
            <Field>
              <Tick type="checkbox" defaultChecked />
              All Sessions
            </Field>
            <Grip />
            <Tools ids="bars candles* line | log bands studyScale | crosshair dataBox* strip | expand narrow thick thin reset" />
            <Grip />
            <Tools ids="chartWin ts bar | quotes quote fire delta | pillars info | globe bug | columns | text grid* | open save" />
            <Grip />
            <Tools ids="back forward | home columnsOff | refresh" />
            <Grip />
            <Tools ids="stop" />
            <Grip />
            <Tools ids="delta" />
            <ComboBox w={99} off text="--Expiration--" />
            <ComboBox w={89} off text="--Type--" />
            <ComboBox w={99} off text="--Strike Price--" />
            <ComboBox w={79} off text="--Montage--" />
            <ComboBox w={79} off text="--Format--" />
            <Divider />
          </Toolbar>

          <Workspace>
            <Palette>
              <PaletteTools>
                <Grip $row />
                <Tools row ids="pointer* segment ray extended retrace projection channel pitchfork levelsTop levelsBottom fan label | magnet* | properties" />
              </PaletteTools>
              <PaletteTools>
                <Grip $row />
                <Tools row ids="mountain link bracket | symOpen symSave | sort | zeros*" />
              </PaletteTools>
            </Palette>

            <ChartArea>
              <Pane>
                <Plot>
                  <Canvas box={PRICE} title="Price chart">
                    <GridLines box={PRICE} rows={PRICES.map((p) => p[0])} halves={[90, 128, 166, 203, 241, 278, 316, 353, 391, 428, 466]} />
                    <Line pts={UPPER} c={BLUE} />
                    <Line pts={MIDDLE} c={BLUE} />
                    {LOWER.map((p) => (
                      <Line key={p} pts={p} c={BLUE} />
                    ))}
                    {PROFILE.map((x, i) => (
                      <rect key={i} x={48} y={179 + i * 4} width={x - 48} height={4} fill="#a6caf0" />
                    ))}
                    {CANDLES.map((c) => (
                      <Candle key={c[0]} c={c} />
                    ))}
                    {STUDIES.map(([c, w, x1, y1, x2, y2], i) =>
                      w > 1 ? (
                        <HeavyLine key={i} x1={x1} y1={y1} x2={x2} y2={y2} c={c} />
                      ) : (
                        <line key={i} x1={x1} y1={y1} x2={x2} y2={y2} stroke={c} transform="translate(0.5 0.5)" />
                      )
                    )}
                  </Canvas>
                  {PRICE_NOTES.map(([x, y, c, t, b]) => (
                    <Note key={t} $color={c} $bold={b} style={{ left: px(x), top: py(y, PRICE) }}>
                      {t}
                    </Note>
                  ))}
                  <DataWindow>
                    <tbody>
                      {DATA.map(([k, v, bg]) => (
                        <DataRow key={k} $bg={bg}>
                          <th scope="row">{k}</th>
                          <td>{v}</td>
                        </DataRow>
                      ))}
                    </tbody>
                  </DataWindow>
                </Plot>
                <Scale>
                  {PRICES.map(([y, t]) => (
                    <ScaleLabel key={t} style={{ top: `calc(${py(y, PRICE)} - 7px)` }}>{t}</ScaleLabel>
                  ))}
                  <ScaleLabel $bg={BLUE} style={{ top: py(335, PRICE) }}>816.089</ScaleLabel>
                  <ScaleLabel $bg="#000" style={{ top: py(344, PRICE) }}>811.00</ScaleLabel>
                  <ScaleLabel $bg={BLUE} style={{ top: py(376, PRICE) }}>793.838</ScaleLabel>
                  <ScaleLabel $bg={BLUE} style={{ top: py(418, PRICE) }}>771.586</ScaleLabel>
                </Scale>
              </Pane>
              <Splitter />
              <Pane $h={ADX.h}>
                <Plot>
                  <Canvas box={ADX} title="Directional movement">
                    <GridLines box={ADX} rows={[493, 529, 565, 601]} halves={[511, 547, 583, 619]} />
                    <Line pts={MINUS_DI} c={RED} />
                    <Line pts={PLUS_DI} c={BLUE} />
                    <Line pts={ADX_LINE} c={MAGENTA} w={2} />
                    <Line pts="1436,600 1606,574" c={MAGENTA} />
                    <Line pts="1389,532 1389,575" c={RED} />
                    <Line pts="1525,537 1525,577" c={RED} />
                  </Canvas>
                  <Note style={{ left: px(38), top: 0 }}>Directional Movement (ADX)(14,14)</Note>
                  <Note $color={RED} style={{ left: px(1341), top: py(507, ADX) }}>SELL +DI -DI cross</Note>
                  <Note $color={RED} style={{ left: px(1481), top: py(504, ADX) }}>
                    {"conservative cover\nfalling DMI, later confirmed\nby DI+ DI- cross"}
                  </Note>
                </Plot>
                <Scale>
                  {[[493, "80.00"], [529, "60.00"], [565, "40.00"]].map(([y, t]) => (
                    <ScaleLabel key={t} style={{ top: `calc(${py(+y, ADX)} - 7px)` }}>{t}</ScaleLabel>
                  ))}
                  <ScaleLabel $bg={BLUE} style={{ top: py(579, ADX) }}>28.49</ScaleLabel>
                  <ScaleLabel $bg={RED} style={{ top: py(597, ADX) }}>18.28</ScaleLabel>
                  <ScaleLabel $bg={MAGENTA} style={{ top: py(590, ADX) }}>22.42</ScaleLabel>
                </Scale>
              </Pane>
              <Splitter />
              <Pane $h={VOL.h}>
                <Plot>
                  <Canvas box={VOL} title="Volume">
                    <GridLines box={VOL} rows={[652]} halves={[661]} from={77} />
                    {VOLUMES.map(([x, y, c]) => (
                      <rect key={x} x={x} y={y} width="1" height={670 - +y} fill={c === "r" ? RED : "#000"} />
                    ))}
                  </Canvas>
                  <Note style={{ left: px(38), top: 0 }}>Volume</Note>
                </Plot>
                <Scale>
                  <ScaleLabel style={{ top: py(645, VOL) }}>500.000</ScaleLabel>
                  <ScaleLabel $bg="#000" style={{ top: py(656, VOL) }}>3,760</ScaleLabel>
                </Scale>
              </Pane>
              <AxisRule />
              <TimeAxis>
                {DAYS.map(([x, t]) => (
                  <Day key={x} style={{ left: px(x) }}>{t}</Day>
                ))}
                {MONTHS.map(([x, t]) => (
                  <Month key={x} style={{ left: px(x + 1) }}>{t}</Month>
                ))}
              </TimeAxis>
            </ChartArea>
          </Workspace>

          <StatusBar>
            <StatusCell>Ready</StatusCell>
            <StatusCell $w={162}>sterling-r07.quote.com:23100</StatusCell>
            <StatusCell $w={102}>18 bytes/sec</StatusCell>
            <StatusCell $w={82}>362.67K bytes</StatusCell>
            <StatusCell $w={82}>0 qbytes</StatusCell>
            <StatusCell $w={59} $bg="#00ff00">0.24 sec</StatusCell>
            <StatusCell $w={52}>08:12:12</StatusCell>
            <svg width="16" height="16" viewBox="0 0 16 16" aria-hidden="true">
              <path d="M4 15L15 4M8 15l7-7M12 15l3-3" stroke="#9d9da1" strokeWidth="2" />
            </svg>
          </StatusBar>
        </Inner>
      </Shell>
    </>
  );
}
